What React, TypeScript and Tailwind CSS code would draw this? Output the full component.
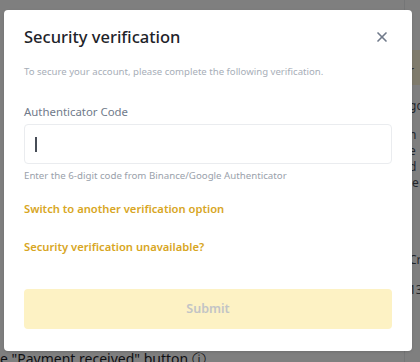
import { X } from 'lucide-react';

export default function App() {
  return (
    <div
      className="relative h-[362px] w-[420px] overflow-hidden bg-white"
      style={{ fontFamily: '"Noto Sans", Inter, sans-serif' }}
    >
      {/* page behind the overlay */}
      <div className="flex h-full">
        <div className="flex-1 pt-[348px] text-[14px] text-[#1e2329] whitespace-nowrap">
          e "Payment received" button ⓘ
        </div>
        <div className="flex w-[16px] flex-col gap-3 border-l border-[#eaecef] pt-[50px] text-[12px] text-[#474d57]">
          <div className="h-[35px] bg-[#fef6d8] pl-1 pt-3">r</div>
          <div className="pl-1">gc</div>
          <div className="pl-1 leading-4">n<br />e<br />d<br />le</div>
          <div className="pl-1 pt-12">Cr</div>
          <div className="pl-1">13</div>
        </div>
      </div>

      <div className="absolute inset-0 bg-black/50" />

      {/* dialog */}
      <div className="absolute left-[4px] top-[10px] h-[341px] w-[408px] rounded-[4px] bg-white px-[20px] pt-[15px] shadow">
        <div className="flex items-center justify-between">
          <h2 className="text-[16.5px] font-medium text-[#1e2329]">Security verification</h2>
          <X className="mr-[2px] h-[16px] w-[16px] text-[#707a8a]" strokeWidth={2.5} />
        </div>
        <p className="mt-[15px] text-[9.6px] text-[#a7aeb8]">
          To secure your account, please complete the following verification.
        </p>

        <div className="mt-[24px] text-[11.4px] text-[#707a8a]">Authenticator Code</div>
        <div className="mt-[4px] flex h-[40px] items-center rounded-[4px] border border-[#eaecef] px-[10px]">
          <span className="h-[15px] w-[2px] bg-[#474d57]" />
        </div>
        <p className="mt-[5px] text-[9.7px] text-[#9aa1ab]">
          Enter the 6-digit code from Binance/Google Authenticator
        </p>

        <div className="mt-[17px] text-[11.2px] font-semibold text-[#d8a623]">
          Switch to another verification option
        </div>
        <div className="mt-[21px] text-[11.2px] font-semibold text-[#d8a623]">
          Security verification unavailable?
        </div>

        <button className="mt-[34px] flex h-[40px] w-full items-center justify-center rounded-[4px] bg-[#fdf2c4] text-[12.5px] font-semibold text-[#c2c4c6]">
          Submit
        </button>
      </div>
    </div>
  );
}
